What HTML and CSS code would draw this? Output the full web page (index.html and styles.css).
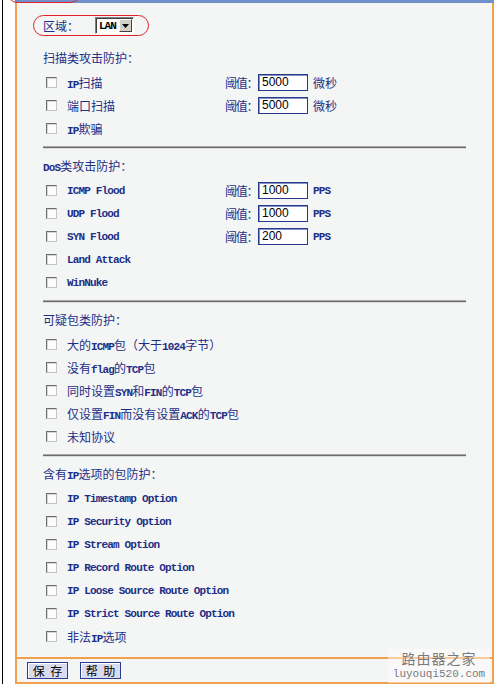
FILE: index.html
```html
<!DOCTYPE html>
<html lang="zh">
<head>
<meta charset="utf-8">
<link rel="stylesheet" href="styles.css">
</head>
<body>
<div class="page">
  <div class="vrule"></div>
  <div class="panel">
    <div class="topbar"></div>
    <div class="main">
      <div class="region">
        <span>区域：</span>
        <span class="sel"><span class="sel-v">LAN</span><span class="sel-b"><svg width="7" height="4" viewBox="0 0 7 4"><path d="M0 0H7L3.5 4Z" fill="#000"/></svg></span></span>
      </div>

      <div class="head">扫描类攻击防护：</div>
      <div class="row"><span class="cb"></span><span class="lbl"><span class="en">IP</span>扫描</span><span class="thr">阈值：</span><span class="inp">5000</span><span class="unit">微秒</span></div>
      <div class="row"><span class="cb"></span><span class="lbl">端口扫描</span><span class="thr">阈值：</span><span class="inp">5000</span><span class="unit">微秒</span></div>
      <div class="row"><span class="cb"></span><span class="lbl"><span class="en">IP</span>欺骗</span></div>
      <div class="sep"></div>

      <div class="head"><span class="en">DoS</span>类攻击防护：</div>
      <div class="row"><span class="cb"></span><span class="lbl en">ICMP Flood</span><span class="thr">阈值：</span><span class="inp">1000</span><span class="unit en">PPS</span></div>
      <div class="row"><span class="cb"></span><span class="lbl en">UDP Flood</span><span class="thr">阈值：</span><span class="inp">1000</span><span class="unit en">PPS</span></div>
      <div class="row"><span class="cb"></span><span class="lbl en">SYN Flood</span><span class="thr">阈值：</span><span class="inp">200</span><span class="unit en">PPS</span></div>
      <div class="row"><span class="cb"></span><span class="lbl en">Land Attack</span></div>
      <div class="row"><span class="cb"></span><span class="lbl en">WinNuke</span></div>
      <div class="sep"></div>

      <div class="head">可疑包类防护：</div>
      <div class="row"><span class="cb"></span><span class="lbl">大的<span class="en">ICMP</span>包（大于<span class="en">1024</span>字节）</span></div>
      <div class="row"><span class="cb"></span><span class="lbl">没有<span class="en">flag</span>的<span class="en">TCP</span>包</span></div>
      <div class="row"><span class="cb"></span><span class="lbl">同时设置<span class="en">SYN</span>和<span class="en">FIN</span>的<span class="en">TCP</span>包</span></div>
      <div class="row"><span class="cb"></span><span class="lbl">仅设置<span class="en">FIN</span>而没有设置<span class="en">ACK</span>的<span class="en">TCP</span>包</span></div>
      <div class="row"><span class="cb"></span><span class="lbl">未知协议</span></div>
      <div class="sep"></div>

      <div class="head">含有<span class="en">IP</span>选项的包防护：</div>
      <div class="row"><span class="cb"></span><span class="lbl en">IP Timestamp Option</span></div>
      <div class="row"><span class="cb"></span><span class="lbl en">IP Security Option</span></div>
      <div class="row"><span class="cb"></span><span class="lbl en">IP Stream Option</span></div>
      <div class="row"><span class="cb"></span><span class="lbl en">IP Record Route Option</span></div>
      <div class="row"><span class="cb"></span><span class="lbl en">IP Loose Source Route Option</span></div>
      <div class="row"><span class="cb"></span><span class="lbl en">IP Strict Source Route Option</span></div>
      <div class="row"><span class="cb"></span><span class="lbl">非法<span class="en">IP</span>选项</span></div>
    </div>
    <div class="footer">
      <span class="btn">保&nbsp; 存</span>
      <span class="btn">帮&nbsp; 助</span>
    </div>
  </div>
  <div class="mark-top"></div>
  <div class="watermark">
    <div class="wm-cn">路由器之家</div>
    <div class="wm-en">luyouqi520.com</div>
  </div>
</div>
</body>
</html>
```
FILE: styles.css
```css
* { box-sizing: border-box; }
html, body { margin: 0; padding: 0; background: #fff; }
body {
  width: 495px;
  height: 684px;
  overflow: hidden;
  font-family: "Noto Sans CJK SC", sans-serif;
  font-size: 12px;
  color: #1d2f86;
}
.page { display: flex; height: 684px; position: relative; }
.vrule { width: 1px; background: #000; margin-left: 2px; margin-right: 12px; }
.panel { width: 479px; display: flex; flex-direction: column; }
.topbar { height: 3px; background: #7090cc; }
.main {
  flex: 1;
  background: #f4f5f5;
  border-left: 2px solid #f3a04e;
  border-right: 2px solid #f3a04e;
  padding-top: 12px;
}
.region {
  display: inline-flex;
  align-items: center;
  margin-left: 16px;
  height: 21px;
  border: 1px solid #e0202a;
  border-radius: 11px;
  padding: 0 14px 0 9px;
  margin-bottom: 10px;
  line-height: 1;
}
.sel {
  display: inline-flex;
  margin-left: 16px;
  width: 39px;
  height: 17px;
  border: 1px solid;
  border-color: #808080 #fff #fff #808080;
  box-shadow: inset 1px 1px 0 #404040;
  background: #fff;
  padding: 1px 1px 1px 2px;
}
.sel-v {
  flex: 1;
  font-family: "Liberation Mono", monospace;
  font-weight: bold;
  font-size: 11px;
  letter-spacing: -1px;
  color: #000;
  line-height: 14px;
  padding-left: 1px;
}
.sel-b {
  width: 13px;
  height: 13px;
  background: #d4d0c8;
  border: 1px solid;
  border-color: #fff #404040 #404040 #fff;
  display: flex;
  align-items: center;
  justify-content: center;
}
.head { height: 25px; line-height: 24px; padding-left: 26px; white-space: nowrap; }
.row { display: flex; align-items: center; height: 23px; padding-left: 29px; }
.cb {
  width: 11px;
  height: 11px;
  margin-right: 10px;
  background: #fcfcfc;
  border: 1px solid;
  border-color: #6e6e6e #c4c4c4 #c4c4c4 #6e6e6e;
  box-shadow: inset 1px 1px 0 #d8d8d8;
  flex: none;
}
.lbl { width: 158px; white-space: nowrap; flex: none; }
.en {
  font-family: "Liberation Mono", monospace;
  font-size: 11px;
  font-weight: bold;
  letter-spacing: -0.84px;
}
.thr { width: 33px; flex: none; white-space: nowrap; letter-spacing: -1.2px; }
.inp {
  flex: none;
  width: 50px;
  height: 17px;
  border: 1px solid #26398c;
  box-shadow: inset 1px 1px 0 #8592c4;
  background: #fff;
  font-family: "Liberation Sans", sans-serif;
  font-size: 12px;
  color: #000;
  padding-left: 3px;
  line-height: 15px;
  margin-right: 5px;
}
.unit { white-space: nowrap; }
.sep {
  width: 423px;
  height: 3px;
  margin: 6px 0 5px 26px;
  background: #6c6c6c;
  border-top: 1px solid #a8a8a8;
  border-bottom: 1px solid #dcdcdc;
}
.footer {
  height: 27px;
  background: #f4f5f5;
  border: 2px solid #f3a04e;
  display: flex;
  align-items: center;
  gap: 12px;
  padding-left: 10px;
}
.btn {
  width: 41px;
  height: 17px;
  border: 1px solid #2b3d8d;
  box-shadow: inset 1px 1px 0 #fff;
  background: #d9dcf0;
  color: #000;
  font-size: 12px;
  line-height: 15px;
  text-align: center;
  white-space: nowrap;
}
.mark-top {
  position: absolute;
  left: 6px;
  top: -22px;
  width: 76px;
  height: 25px;
  border: 1.5px solid #e0202a;
  border-radius: 12px;
}
.watermark {
  position: absolute;
  left: 388px;
  top: 649px;
  width: 102px;
  height: 34px;
  background: rgba(255, 255, 255, 0.45);
  color: #7a7a7a;
  text-align: center;
  display: flex;
  flex-direction: column;
  justify-content: space-between;
  padding: 0 0 2px;
}
.wm-cn { font-family: "Noto Sans CJK SC", sans-serif; font-size: 14px; letter-spacing: 1px; line-height: 18px; }
.wm-en { font-family: "Liberation Mono", monospace; font-size: 11px; line-height: 13px; }
```
